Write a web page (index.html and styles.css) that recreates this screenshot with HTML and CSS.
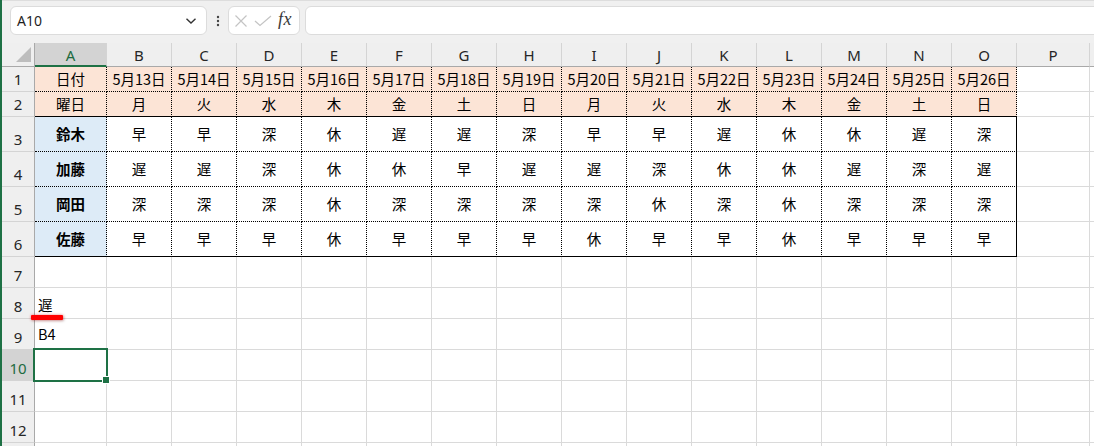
FILE: index.html
```html
<!DOCTYPE html>
<html lang="ja">
<head>
<meta charset="utf-8">
<title>Sheet</title>
<link rel="stylesheet" href="styles.css">
</head>
<body>
<div class="app">
  <div class="bar">
    <div class="namebox">
      <span class="ref">A10</span>
      <svg class="chev" width="12" height="8" viewBox="0 0 12 8"><path d="M1.5 1.8 L6 6 L10.5 1.8" fill="none" stroke="#333" stroke-width="1.4"/></svg>
    </div>
    <div class="grip">
      <svg width="4" height="12" viewBox="0 0 4 12"><circle cx="2" cy="2" r="1.2" fill="#444"/><circle cx="2" cy="6" r="1.2" fill="#444"/><circle cx="2" cy="10" r="1.2" fill="#444"/></svg>
    </div>
    <div class="fxbox">
      <svg class="ico" width="14" height="12" viewBox="0 0 14 12"><path d="M1.5 0.5 L12.5 11.5 M12.5 0.5 L1.5 11.5" fill="none" stroke="#c4c4c4" stroke-width="1.2"/></svg>
      <svg class="ico" width="18" height="12" viewBox="0 0 18 12"><path d="M1 6 L6 10.5 L17 1" fill="none" stroke="#c4c4c4" stroke-width="1.2"/></svg>
      <span class="fx">fx</span>
    </div>
    <div class="formula"></div>
  </div>

  <div class="sheet">
    <!-- column headers -->
    <div class="corner"><svg width="17" height="17" viewBox="0 0 17 17"><path d="M16 1 L16 16 L1 16 Z" fill="#bdbdbd"/></svg></div>
    <div class="ch sel">A</div><div class="ch">B</div><div class="ch">C</div><div class="ch">D</div><div class="ch">E</div><div class="ch">F</div><div class="ch">G</div><div class="ch">H</div><div class="ch">I</div><div class="ch">J</div><div class="ch">K</div><div class="ch">L</div><div class="ch">M</div><div class="ch">N</div><div class="ch">O</div><div class="ch">P</div><div class="ch"></div>

    <!-- row 1 -->
    <div class="rh">1</div>
    <div class="c h">日付</div><div class="c h">5月13日</div><div class="c h">5月14日</div><div class="c h">5月15日</div><div class="c h">5月16日</div><div class="c h">5月17日</div><div class="c h">5月18日</div><div class="c h">5月19日</div><div class="c h">5月20日</div><div class="c h">5月21日</div><div class="c h">5月22日</div><div class="c h">5月23日</div><div class="c h">5月24日</div><div class="c h">5月25日</div><div class="c h">5月26日</div>
    <div class="c"></div><div class="c"></div>

    <!-- row 2 -->
    <div class="rh">2</div>
    <div class="c h bb">曜日</div><div class="c h bb">月</div><div class="c h bb">火</div><div class="c h bb">水</div><div class="c h bb">木</div><div class="c h bb">金</div><div class="c h bb">土</div><div class="c h bb">日</div><div class="c h bb">月</div><div class="c h bb">火</div><div class="c h bb">水</div><div class="c h bb">木</div><div class="c h bb">金</div><div class="c h bb">土</div><div class="c h bb">日</div>
    <div class="c"></div><div class="c"></div>

    <!-- row 3 -->
    <div class="rh">3</div>
    <div class="c n">鈴木</div><div class="c d">早</div><div class="c d">早</div><div class="c d">深</div><div class="c d">休</div><div class="c d">遅</div><div class="c d">遅</div><div class="c d">深</div><div class="c d">早</div><div class="c d">早</div><div class="c d">遅</div><div class="c d">休</div><div class="c d">休</div><div class="c d">遅</div><div class="c d br">深</div>
    <div class="c"></div><div class="c"></div>

    <!-- row 4 -->
    <div class="rh">4</div>
    <div class="c n">加藤</div><div class="c d">遅</div><div class="c d">遅</div><div class="c d">深</div><div class="c d">休</div><div class="c d">休</div><div class="c d">早</div><div class="c d">遅</div><div class="c d">遅</div><div class="c d">深</div><div class="c d">休</div><div class="c d">休</div><div class="c d">遅</div><div class="c d">深</div><div class="c d br">遅</div>
    <div class="c"></div><div class="c"></div>

    <!-- row 5 -->
    <div class="rh">5</div>
    <div class="c n">岡田</div><div class="c d">深</div><div class="c d">深</div><div class="c d">深</div><div class="c d">休</div><div class="c d">深</div><div class="c d">深</div><div class="c d">深</div><div class="c d">深</div><div class="c d">休</div><div class="c d">深</div><div class="c d">休</div><div class="c d">深</div><div class="c d">深</div><div class="c d br">深</div>
    <div class="c"></div><div class="c"></div>

    <!-- row 6 -->
    <div class="rh">6</div>
    <div class="c n bb">佐藤</div><div class="c d bb">早</div><div class="c d bb">早</div><div class="c d bb">早</div><div class="c d bb">休</div><div class="c d bb">早</div><div class="c d bb">早</div><div class="c d bb">早</div><div class="c d bb">休</div><div class="c d bb">早</div><div class="c d bb">早</div><div class="c d bb">休</div><div class="c d bb">早</div><div class="c d bb">早</div><div class="c d bb br">早</div>
    <div class="c"></div><div class="c"></div>

    <!-- row 7 -->
    <div class="rh">7</div>
    <div class="c"></div><div class="c"></div><div class="c"></div><div class="c"></div><div class="c"></div><div class="c"></div><div class="c"></div><div class="c"></div><div class="c"></div><div class="c"></div><div class="c"></div><div class="c"></div><div class="c"></div><div class="c"></div><div class="c"></div><div class="c"></div><div class="c"></div>

    <!-- row 8 -->
    <div class="rh">8</div>
    <div class="c tx mark">遅</div><div class="c"></div><div class="c"></div><div class="c"></div><div class="c"></div><div class="c"></div><div class="c"></div><div class="c"></div><div class="c"></div><div class="c"></div><div class="c"></div><div class="c"></div><div class="c"></div><div class="c"></div><div class="c"></div><div class="c"></div><div class="c"></div>

    <!-- row 9 -->
    <div class="rh">9</div>
    <div class="c tx latin">B4</div><div class="c"></div><div class="c"></div><div class="c"></div><div class="c"></div><div class="c"></div><div class="c"></div><div class="c"></div><div class="c"></div><div class="c"></div><div class="c"></div><div class="c"></div><div class="c"></div><div class="c"></div><div class="c"></div><div class="c"></div><div class="c"></div>

    <!-- row 10 -->
    <div class="rh sel">10</div>
    <div class="c active"></div><div class="c"></div><div class="c"></div><div class="c"></div><div class="c"></div><div class="c"></div><div class="c"></div><div class="c"></div><div class="c"></div><div class="c"></div><div class="c"></div><div class="c"></div><div class="c"></div><div class="c"></div><div class="c"></div><div class="c"></div><div class="c"></div>

    <!-- row 11 -->
    <div class="rh">11</div>
    <div class="c"></div><div class="c"></div><div class="c"></div><div class="c"></div><div class="c"></div><div class="c"></div><div class="c"></div><div class="c"></div><div class="c"></div><div class="c"></div><div class="c"></div><div class="c"></div><div class="c"></div><div class="c"></div><div class="c"></div><div class="c"></div><div class="c"></div>

    <!-- row 12 -->
    <div class="rh">12</div>
    <div class="c"></div><div class="c"></div><div class="c"></div><div class="c"></div><div class="c"></div><div class="c"></div><div class="c"></div><div class="c"></div><div class="c"></div><div class="c"></div><div class="c"></div><div class="c"></div><div class="c"></div><div class="c"></div><div class="c"></div><div class="c"></div><div class="c"></div>

    <!-- row 13 (only its top edge is visible) -->
    <div class="rh"></div>
    <div class="c"></div><div class="c"></div><div class="c"></div><div class="c"></div><div class="c"></div><div class="c"></div><div class="c"></div><div class="c"></div><div class="c"></div><div class="c"></div><div class="c"></div><div class="c"></div><div class="c"></div><div class="c"></div><div class="c"></div><div class="c"></div><div class="c"></div>
  </div>
</div>
</body>
</html>
```

FILE: styles.css
```css
* {
  box-sizing: border-box;
  margin: 0;
  padding: 0;
}

html, body {
  margin: 0;
  width: 1094px;
  height: 446px;
  overflow: hidden;
  background: #ffffff;
}

body {
  font-family: "Noto Sans", "Noto Sans CJK JP", sans-serif;
}

.app {
  height: 446px;
  border-left: 2px solid #1e7145;
  overflow: hidden;
}

/* ---------- formula bar ---------- */
.bar {
  height: 43px;
  background: #f0f0f0;
  border-top: 1px solid #dddddd;
  display: flex;
  align-items: flex-start;
  padding: 5px 0 0 8px;
}

.namebox {
  width: 197px;
  height: 29px;
  background: #ffffff;
  border: 1px solid #dcdcdc;
  border-radius: 6px;
  display: flex;
  align-items: center;
  justify-content: space-between;
  padding: 0 9px 0 6px;
}

.ref {
  font-family: "Noto Sans", sans-serif;
  font-size: 14px;
  color: #1f1f1f;
}

.chev {
  display: block;
}

.grip {
  width: 21px;
  height: 29px;
  display: flex;
  align-items: center;
  justify-content: center;
}

.grip svg {
  display: block;
}

.fxbox {
  width: 72px;
  height: 29px;
  background: #ffffff;
  border: 1px solid #dcdcdc;
  border-radius: 6px;
  display: flex;
  align-items: center;
  gap: 6px;
  padding-left: 5px;
  margin-right: 5px;
}

.ico {
  display: block;
}

.fx {
  font-family: "Liberation Serif", serif;
  font-style: italic;
  font-size: 18px;
  color: #3a3a3a;
  letter-spacing: 0.5px;
  margin-top: -2px;
}

.formula {
  flex: 1;
  height: 29px;
  background: #ffffff;
  border: 1px solid #dcdcdc;
  border-radius: 6px;
  margin-right: -10px;
}

/* ---------- sheet grid ---------- */
.sheet {
  display: grid;
  grid-template-columns: 33px 72px repeat(14, 65px) 73px 1fr;
  grid-template-rows: 24px 25px 25px repeat(4, 35px) repeat(7, 31px);
}

.corner {
  background: #efefef;
  border-right: 1px solid #a9a9a9;
  border-bottom: 1px solid #a9a9a9;
  display: flex;
  align-items: flex-end;
  justify-content: flex-end;
  padding: 0 2px 3px 0;
}

.corner svg {
  display: block;
}

.ch {
  background: #efefef;
  border-right: 1px solid #d4d4d4;
  border-bottom: 1px solid #a9a9a9;
  display: flex;
  align-items: center;
  justify-content: center;
  font-size: 15px;
  color: #262626;
}

.ch.sel {
  background: #d3d3d3;
  color: #1e6b41;
  border-bottom: 2px solid #1e7145;
  padding-top: 1px;
}

.rh {
  background: #efefef;
  border-right: 1px solid #a9a9a9;
  border-bottom: 1px solid #d4d4d4;
  display: flex;
  align-items: flex-end;
  justify-content: center;
  padding-bottom: 3px;
  font-size: 15px;
  line-height: 18px;
  color: #262626;
}

.rh.sel {
  background: #d3d3d3;
  color: #1e6b41;
}

/* cells */
.c {
  border-right: 1px solid #dadada;
  border-bottom: 1px solid #dadada;
  font-family: "Noto Sans CJK JP", "Noto Sans", sans-serif;
  font-size: 14.5px;
  line-height: 18px;
  color: #000000;
  white-space: nowrap;
  overflow: hidden;
  display: flex;
  align-items: flex-end;
  padding: 0 3px 4px;
}

.h,
.d,
.n {
  border-right: 1px dotted #000000;
  border-bottom: 1px dotted #000000;
  align-items: center;
  justify-content: center;
  padding: 0;
}

.h {
  background: #fce4d6;
}

.n {
  background: #ddebf7;
  font-weight: 700;
}

.bb {
  border-bottom: 1px solid #000000;
}

.br {
  border-right: 1px solid #000000;
}

.tx {
  justify-content: flex-start;
}

.latin {
  padding-bottom: 6px;
}

/* overlays */
.mark {
  position: relative;
  overflow: visible;
}

.mark::after {
  content: "";
  position: absolute;
  left: -4px;
  top: 27px;
  width: 32px;
  height: 5px;
  background: #ff0000;
  border-radius: 1px;
  box-shadow: 0 0 3px rgba(255, 0, 0, 0.45), 1px 1px 3px rgba(0, 0, 0, 0.25);
  z-index: 2;
}

.active {
  position: relative;
  overflow: visible;
}

.active::before {
  content: "";
  position: absolute;
  left: -2px;
  top: -2px;
  right: -2px;
  bottom: -2px;
  border: 2px solid #1e7145;
  z-index: 2;
}

.active::after {
  content: "";
  position: absolute;
  right: -4px;
  bottom: -4px;
  width: 6px;
  height: 6px;
  background: #1e7145;
  border: 1px solid #ffffff;
  z-index: 3;
}
```
